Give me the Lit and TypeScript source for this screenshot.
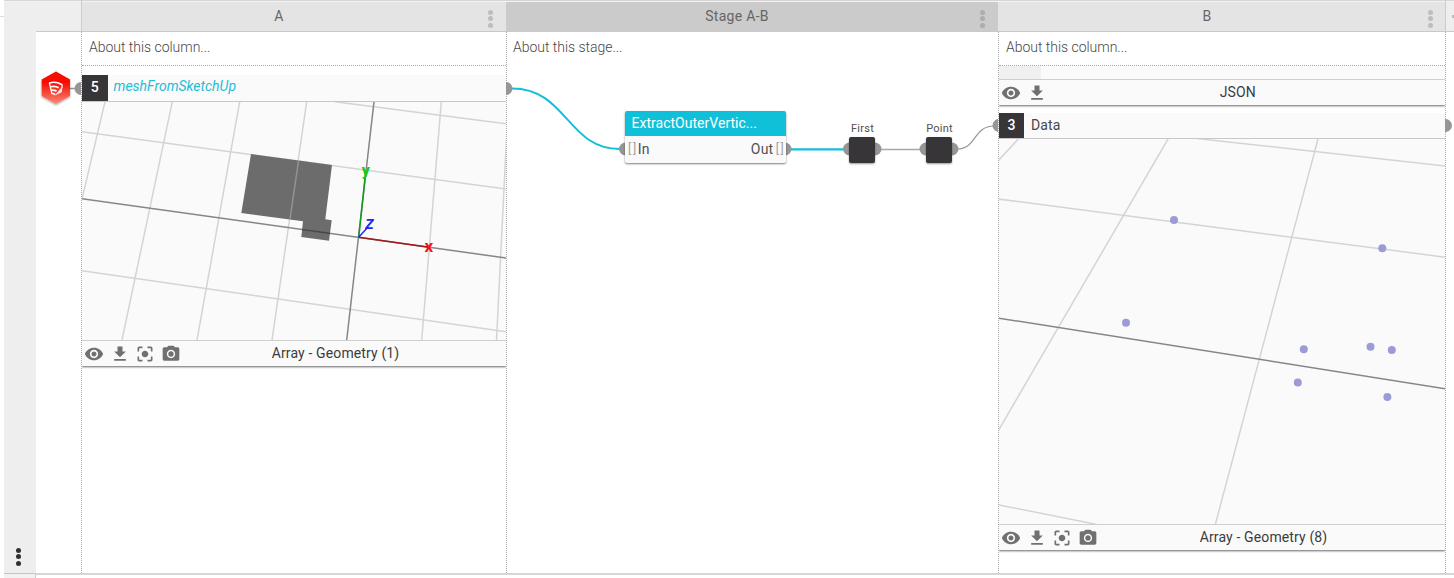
import { LitElement, html, svg, css } from "lit";
import { customElement, property } from "lit/decorators.js";

type Line = [number, number, number, number, boolean?];

const ICONS: Record<string, string> = {
  eye: "M12 4.500C7 4.500 2.730 7.610 1 12c1.730 4.390 6 7.500 11 7.500s9.270-3.110 11-7.500c-1.730-4.390-6-7.500-11-7.500zM12 17c-2.760 0-5-2.240-5-5s2.240-5 5-5 5 2.240 5 5-2.240 5-5 5zm0-8c-1.660 0-3 1.340-3 3s1.340 3 3 3 3-1.340 3-3-1.340-3-3-3z",
  download: "M19 9h-4V3H9v6H5l7 7 7-7zM5 18v2h14v-2H5z",
  focus: "M5 15H3v4c0 1.100.9 2 2 2h4v-2H5v-4zM5 5h4V3H5c-1.100 0-2 .9-2 2v4h2V5zm14-2h-4v2h4v4h2V5c0-1.100-.9-2-2-2zm0 16h-4v2h4c1.100 0 2-.9 2-2v-4h-2v4zM12 8c-2.210 0-4 1.790-4 4s1.790 4 4 4 4-1.790 4-4-1.790-4-4-4z",
  camera: "M9 2L7.170 4H4c-1.100 0-2 .9-2 2v12c0 1.100.9 2 2 2h16c1.100 0 2-.9 2-2V6c0-1.100-.9-2-2-2h-3.170L15 2H9zm3 15c-2.760 0-5-2.240-5-5s2.240-5 5-5 5 2.240 5 5-2.240 5-5 5zM12 8.800a3.200 3.200 0 1 0 0 6.400 3.200 3.200 0 0 0 0-6.400z",
};

const GRID_A: Line[] = [
  [335, 101.7, 506, 123.7], [82, 131.7, 506, 189], [82, 270.7, 506, 331.7],
  [105, 101.7, 82, 199], [172.3, 101.7, 122, 340], [239.7, 101.7, 197, 340],
  [441.3, 101.7, 421.7, 340], [508.3, 101.7, 496.5, 340],
  [82, 198.7, 506, 258, true], [374, 101.7, 346.7, 340, true],
];
const GRID_B: Line[] = [
  [1196.7, 138.5, 1446, 166], [998, 199, 1446, 257.3], [998, 504.7, 1097, 524.5],
  [1018.3, 139, 998, 160.9], [1168, 139, 998, 431.2], [1318, 139, 1215.3, 524.5],
  [998, 318, 1446, 388.8, true],
];
const POINTS = [
  [1174, 220], [1382.3, 248.3], [1126, 322.7], [1303.8, 349.2],
  [1370.5, 346.7], [1391.8, 350.1], [1297.8, 382.6], [1387.4, 397.1],
];

const gridLines = (lines: Line[]) => lines.map(([x1, y1, x2, y2, main]) => svg`
  <line x1=${x1} y1=${y1} x2=${x2} y2=${y2} stroke=${main ? "#868686" : "#d4d4d4"} stroke-width="1.500" />`);

@customElement("menu-dots")
class MenuDots extends LitElement {
  static styles = css`
    :host { display: flex; flex-direction: column; gap: 1.500px; }
    .dot { width: 5px; height: 5px; border-radius: 50%; background: currentColor; }
  `;
  render() {
    return html`<i class="dot"></i><i class="dot"></i><i class="dot"></i>`;
  }
}

@customElement("panel-bar")
class PanelBar extends LitElement {
  @property() label = "";
  @property({ attribute: false }) icons: string[] = [];
  static styles = css`
    :host {
      display: flex; align-items: center;
      box-sizing: border-box; height: 26px; padding: 0 16px 0 2px; background: #fafafa;
      border-top: 1px solid #cfcfcf; box-shadow: 0 1px 2px rgba(0, 0, 0, 0.6);
      position: relative; clip-path: inset(0 0 -5px 0);
    }
    .icons { display: flex; gap: 5.700px; }
    svg { display: block; width: 20px; height: 20px; fill: #707070; }
    .label {
      flex: 1; text-align: center; font-size: 14px; line-height: 22px; padding-bottom: 2px;
      letter-spacing: 0.130px; color: #3c3c3c;
    }
  `;
  render() {
    return html`
      <div class="icons">${this.icons.map((n) => html`<svg viewBox="0 0 24 24"><path d=${ICONS[n]}></path></svg>`)}</div>
      <div class="label">${this.label}</div>`;
  }
}

@customElement("app-root")
class AppRoot extends LitElement {
  static styles = css`
    :host {
      display: block; width: 1454px; height: 578px; overflow: hidden; background: #fff;
      font-family: Roboto, "Liberation Sans", sans-serif; font-size: 14px; color: #505050;
    }
    .sheet {
      display: grid; grid-template-columns: 4px 32px 45px 425px 492px 448px 8px;
      grid-template-rows: 32px 541px 5px; height: 578px;
    }
    .head {
      box-sizing: border-box; border-top: 1px solid #d5d5d5; border-bottom: 1px solid #c9c9c9;
      box-shadow: inset 0 1px #f4f4f4; background: #e4e4e4; color: #666;
      display: flex; align-items: center; line-height: 28px; letter-spacing: 0.300px;
    }
    .title { flex: 1; text-align: center; }
    .head menu-dots { margin: 5px 13px 0 12px; color: #bdbdbd; }
    .head.stage { background: #cbcbcb; }
    .head.stage menu-dots { color: #adadad; }
    .head.a { border-left: 1px solid #ccc; }
    .head.corner { background: #eee; }
    .head.rail-top { border-bottom-color: #eee; }
    .head.end { border-left: 1px solid #ccc; margin-left: -1px; justify-content: flex-end; }
    .peek { width: 2px; height: 3px; background: #bbb; }
    .tick { margin-top: 16px; height: 1px; background: #ddd; }
    .rail {
      background: #eee; display: flex; flex-direction: column; justify-content: flex-end;
      align-items: center; padding: 0 2.500px 7.500px 0; color: #2f2f2f;
    }
    .gutter { display: flex; align-items: center; height: 34px; margin-top: 39px; padding-left: 5px; }
    .gutter svg { display: block; overflow: visible; }
    .col { box-sizing: border-box; border-left: 1px dotted #aaa; min-width: 0; }
    .col.b { border-right: 1px dotted #aaa; }
    .about {
      box-sizing: border-box; height: 34px; border-bottom: 1px dotted #aaa; padding-left: 7px;
      line-height: 30px; font-weight: 300; letter-spacing: -0.030px; color: #484848;
    }
    .row {
      box-sizing: border-box; height: 27px; background: #fafafa; border-bottom: 1px solid #c8c8c8;
      display: flex; align-items: center; position: relative;
    }
    .a .row { margin-top: 9px; }
    .b .row { margin-top: 8px; height: 26px; }
    .num {
      width: 25.500px; height: 26px; line-height: 25px; background: #373538; color: #fff;
      text-align: center; font-weight: 500; font-size: 14px;
    }
    .b .num { height: 25px; width: 25px; }
    .name { padding: 0 0 2px 7px; letter-spacing: 0.100px; color: #484848; }
    .name.mesh { color: #1fbdd6; font-style: italic; padding: 0 0 4px 6px; letter-spacing: 0; }
    .strip { height: 13px; background: #fafafa; }
    .strip-tab { width: 42px; height: 100%; background: #f0f0f0; }
    .scene { display: block; background: #fafafa; width: 100%; }
    .stagebody { position: relative; border-left: 1px dotted #aaa; }
    .stagebody .about { border-bottom: 0; padding-left: 6px; }
    .wires { position: absolute; left: -1px; top: 0; }
    .node {
      position: absolute; left: 118px; top: 79px; width: 160.500px; height: 51.500px; border-radius: 2px;
      box-shadow: 0 1px 2px rgba(0, 0, 0, 0.5); background: #fafafa;
    }
    .node-title {
      height: 25px; line-height: 24px; box-sizing: border-box; background: #10c0d8; color: #fff;
      padding-left: 6.500px; border-radius: 2px 2px 0 0; letter-spacing: 0.020px;
    }
    .node-ports { display: flex; align-items: center; height: 26px; padding: 0 0 0 3px; letter-spacing: 0.150px; }
    .node-ports .grow { flex: 1; }
    .br { color: #a0a0a0; font-size: 12px; letter-spacing: 1.700px; }
    .br.r { padding-left: 2.500px; }
    .mini {
      position: absolute; top: 105px; width: 26px; height: 26px; background: #373538; border-radius: 2px;
      box-shadow: 0 1px 2px rgba(0, 0, 0, 0.4);
    }
    .mini.first { left: 342px; }
    .mini.point { left: 419px; }
    .caption {
      position: absolute; top: -15px; left: -19.500px; width: 66px; text-align: center; font-size: 11px;
      line-height: 14px; letter-spacing: 0.250px;
    }
    .port-out {
      position: absolute; left: 100%; top: 6px; width: 7px; height: 13px; background: #969696;
      border-radius: 0 7px 7px 0;
    }
    .foot { grid-column: 3 / 8; border-top: 2px solid #d6d6d6; border-left: 1px solid #ccc; margin-left: -1px; }
    .foot-rail { background: #f2f2f2; border-top: 1px solid #c4c4c4; }
  `;

  render() {
    const tools = ["eye", "download", "focus", "camera"];
    return html`
      <div class="sheet">
        <div class="tick"></div>
        <div class="head corner rail-top"></div>
        <div class="head corner"></div>
        <div class="head a"><span class="title">A</span><menu-dots></menu-dots></div>
        <div class="head stage"><span class="title">Stage A-B</span><menu-dots></menu-dots></div>
        <div class="head b"><span class="title">B</span><menu-dots></menu-dots></div>
        <div class="head corner end"><i class="peek"></i></div>

        <div></div>
        <div class="rail"><menu-dots></menu-dots></div>
        <div class="gutter">
          <svg width="40" height="34" viewBox="41 71 40 34">
            <defs>
              <linearGradient id="hex" x1="0" y1="0" x2="0" y2="1">
                <stop offset="0.35" stop-color="#f50e04" /><stop offset="1" stop-color="#f98a78" />
              </linearGradient>
              <filter id="soft" x="-20%" y="-20%" width="140%" height="150%">
                <feDropShadow dx="0" dy="1" stdDeviation="0.8" flood-opacity="0.4" />
              </filter>
            </defs>
            <path d="M70 88.500h8" stroke="#969696" stroke-width="1.500" />
            <path d="M81 82a6.500 6.500 0 0 0 0 13z" fill="#969696" />
            <path d="M56 71.500l14 8v16.500l-14 8-14.300-8v-16.500z" fill="url(#hex)" filter="url(#soft)" />
            <path d="M49.600 83c4-1.400 8.300-.6 12 1.600M50.700 86.800c3-.9 5.600-.4 8 1M51.300 90.300c2-.5 3.600-.1 5.200.8M51.800 93.500c1.200-.1 2.200.2 3.200 1.200" fill="none" stroke="#fff" stroke-width="1.700" />
            <path d="M49.300 82.500l2.700 11.500M62 84v4" stroke="#fff" stroke-width="1.200" />
            <path d="M54.500 95.800L62.600 86l-.8 6.300z" fill="#fde3df" />
          </svg>
        </div>
        <div class="col a">
          <div class="about">About this column...</div>
          <div class="row"><span class="num">5</span><span class="name mesh">meshFromSketchUp</span></div>
          <svg class="scene" height="238" viewBox="82 102 424 238" preserveAspectRatio="none">
            <path d="M306.700 101.700L272 340" stroke="#d4d4d4" stroke-width="1.500" />
            ${gridLines(GRID_A.slice(0, 8))}
            <path d="M251 154L332 165 325.300 219.300 331.700 220.300 329 240.700 301.300 237 303 221.300 241.300 213z" fill="#6c6c6c" />
            ${gridLines(GRID_A.slice(8))}
            <path d="M298.500 161L290 219" stroke="#929292" stroke-width="1.500" />
            <path d="M302 229.500L330 233.400" stroke="#484848" stroke-width="1.700" />
            <path d="M358.700 237.300L429 247.300" stroke="#a01818" stroke-width="1.500" />
            <path d="M358.700 237.300L365.700 172" stroke="#109a18" stroke-width="1.500" />
            <path d="M358.700 237.300L368 227" stroke="#2020f0" stroke-width="1.400" />
            <text x="361.700" y="175.500" font-size="16" font-weight="700" fill="#12c812">y</text>
            <text x="424.600" y="252" font-size="17" font-weight="700" fill="#f01414">x</text>
            <text x="365.300" y="229" font-size="18" font-style="italic" font-weight="500" fill="#2424f4">z</text>
          </svg>
          <panel-bar .icons=${tools} label="Array - Geometry (1)"></panel-bar>
        </div>
        <div class="stagebody">
          <div class="about">About this stage...</div>
          <svg class="wires" width="492" height="541" viewBox="506 32 492 541">
            <g fill="none">
              <path d="M512 88.500C567 88.500 567 149 620 149" stroke="#10bfd8" stroke-width="1.900" />
              <path d="M791 149.300H845" stroke="#10bfd8" stroke-width="2.200" />
              <path d="M881 149.500H921" stroke="#a8a8a8" stroke-width="1.300" />
              <path d="M957 149C977 149 973 126 994 126" stroke="#969696" stroke-width="1.200" />
            </g>
            <g fill="#969696">
              <path d="M506 82a6.500 6.500 0 0 1 0 13z" />
              <circle cx="625.500" cy="149" r="6.500" /><circle cx="785" cy="149" r="6.500" />
              <circle cx="849.500" cy="149" r="6.500" /><circle cx="875" cy="149" r="6.500" />
              <circle cx="926" cy="149" r="6.500" /><circle cx="952" cy="149" r="6.500" />
              <path d="M999 119a6.500 6.500 0 0 0 0 13z" />
            </g>
          </svg>
          <div class="node">
            <div class="node-title">ExtractOuterVertic...</div>
            <div class="node-ports"><span class="br">[]</span>In<span class="grow"></span>Out<span class="br r">[]</span></div>
          </div>
          <div class="mini first"><span class="caption">First</span></div>
          <div class="mini point"><span class="caption">Point</span></div>
        </div>
        <div class="col b">
          <div class="about">About this column...</div>
          <div class="strip"><div class="strip-tab"></div></div>
          <panel-bar .icons=${["eye", "download"]} label="JSON"></panel-bar>
          <div class="row"><span class="num">3</span><span class="name">Data</span><span class="port-out"></span></div>
          <svg class="scene" height="385" viewBox="999 139 446 385" preserveAspectRatio="none">
            ${gridLines(GRID_B)}
            ${POINTS.map(([x, y]) => svg`<circle cx=${x} cy=${y} r="4" fill="#9c9bd8" />`)}
          </svg>
          <panel-bar .icons=${tools} label="Array - Geometry (8)"></panel-bar>
        </div>
        <div></div>

        <div></div>
        <div class="foot-rail"></div>
        <div class="foot"></div>
      </div>`;
  }
}
